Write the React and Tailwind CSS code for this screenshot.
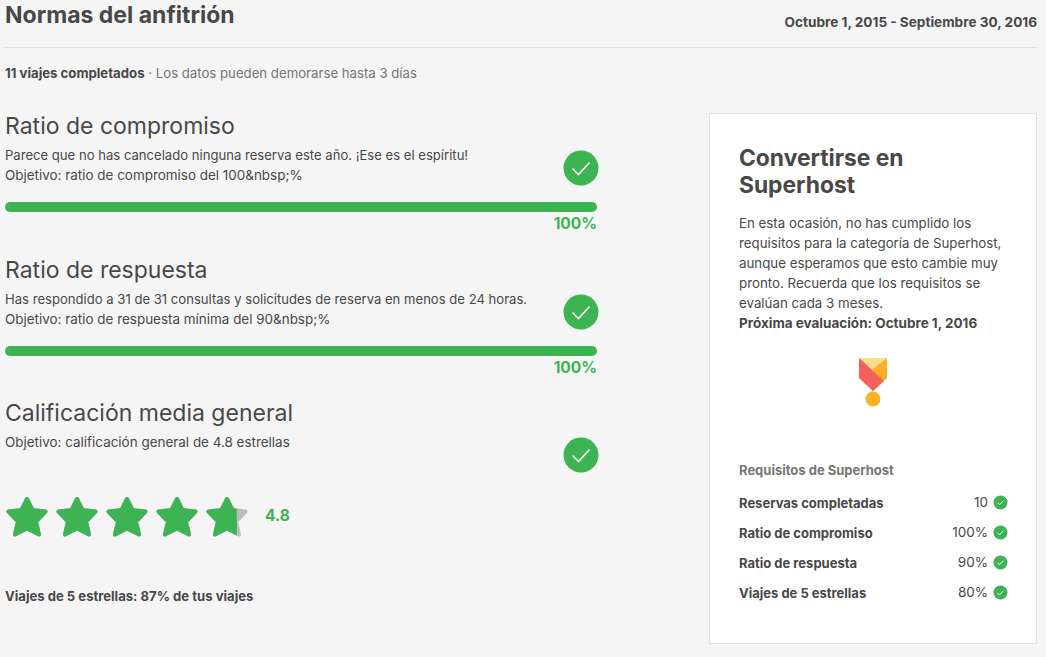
const font = { fontFamily: '"Inter", "Liberation Sans", sans-serif' };

function CheckCircle() {
  return (
    <svg width="36" height="36" viewBox="0 0 36 36" className="shrink-0">
      <circle cx="18" cy="18" r="17.5" fill="#3eb353" />
      <path d="M9.5 18.5l6 6 11-12" fill="none" stroke="#fff" strokeWidth="1.6" />
    </svg>
  );
}

function SmallCheck() {
  return (
    <svg width="15" height="15" viewBox="0 0 15 15" className="shrink-0">
      <circle cx="7.5" cy="7.5" r="7" fill="#3eb353" />
      <path d="M4.5 7.8l2 2 4-4.2" fill="none" stroke="#fff" strokeWidth="1" />
    </svg>
  );
}

function Star({ id, fill = 1 }) {
  const d = "M22 4L27.5 15L40.5 16.5L31 26.5L34 39.5L22 33.5L10 39.5L13 26.5L3.5 16.5L16.5 15Z";
  return (
    <svg width="44" height="44" viewBox="0 0 44 44" className="shrink-0 mr-1.5">
      <defs>
        <clipPath id={id}>
          <rect x="0" y="0" width={44 * fill} height="44" />
        </clipPath>
      </defs>
      <path d={d} fill="#bdbdbd" stroke="#bdbdbd" strokeWidth="4" strokeLinejoin="round" />
      <path d={d} fill="#3eb353" stroke="#3eb353" strokeWidth="4" strokeLinejoin="round" clipPath={`url(#${id})`} />
    </svg>
  );
}

function Metric({ title, text, goal, showBar = true }) {
  return (
    <section className="w-[592px]">
      <h2 className="text-[23px] leading-[30px] text-[#484848]">{title}</h2>
      <div className="flex justify-between items-start mt-[4px]">
        <div className="leading-[20px] text-[#484848]">
          {text && <p className="text-[13.1px]">{text}</p>}
          <p className="text-[13.45px]">{goal}</p>
        </div>
        <div className="mt-[5px] mr-[-2px]">
          <CheckCircle />
        </div>
      </div>
      {showBar && (
        <>
          <div className="h-[10px] rounded-full bg-[#3eb353] mt-[16px]" />
          <p className="text-right font-bold text-[15.5px] leading-[20px] text-[#3eb353] mt-[2px]">100%</p>
        </>
      )}
    </section>
  );
}

const reqs = [
  ["Reservas completadas", "10"],
  ["Ratio de compromiso", "100%"],
  ["Ratio de respuesta", "90%"],
  ["Viajes de 5 estrellas", "80%"],
];

export default function App() {
  return (
    <div style={font} className="w-[1046px] h-[657px] overflow-hidden bg-[#f5f5f5] text-[#484848] pl-[5px] pr-[9px]">
      <header className="flex justify-between h-[48px] border-b border-[#e0e0e0]">
        <h1 className="text-[23px] leading-[30px] font-bold">Normas del anfitrión</h1>
        <p className="text-[13.6px] font-bold leading-[20px] mt-[12px]">Octubre 1, 2015 - Septiembre 30, 2016</p>
      </header>
      <p className="text-[13.2px] leading-[20px] mt-[15px] text-[#767676]">
        <span className="font-bold text-[#484848]">11 viajes completados</span> · Los datos pueden demorarse hasta 3 días
      </p>

      <div className="flex justify-between items-start mt-[28px]">
        <div className="flex flex-col gap-[20.5px]">
          <Metric
            title="Ratio de compromiso"
            text="Parece que no has cancelado ninguna reserva este año. ¡Ese es el espíritu!"
            goal="Objetivo: ratio de compromiso del 100&amp;nbsp;%"
          />
          <Metric
            title="Ratio de respuesta"
            text="Has respondido a 31 de 31 consultas y solicitudes de reserva en menos de 24 horas."
            goal="Objetivo: ratio de respuesta mínima del 90&amp;nbsp;%"
          />
          <div>
            <Metric title="Calificación media general" goal="Objetivo: calificación general de 4.8 estrellas" showBar={false} />
            <div className="flex items-center mt-[22px]">
              <Star id="s1" />
              <Star id="s2" />
              <Star id="s3" />
              <Star id="s4" />
              <Star id="s5" fill={0.72} />
              <span className="ml-[10px] mb-[2px] font-bold text-[15.5px] text-[#3eb353]">4.8</span>
            </div>
            <p className="font-bold text-[13.1px] leading-[20px] mt-[47px]">Viajes de 5 estrellas: 87% de tus viajes</p>
          </div>
        </div>

        <aside className="w-[328px] h-[531px] bg-white border border-[#e0e0e0] pl-[29px] pr-[28px] pt-[30px] mt-[2px]">
          <h2 className="text-[22.8px] leading-[27px] font-bold">Convertirse en Superhost</h2>
          <p className="text-[13.3px] leading-[20px] mt-[15px]">
            En esta ocasión, no has cumplido los requisitos para la categoría de Superhost, aunque esperamos que esto cambie muy pronto. Recuerda que los requisitos se evalúan cada 3 meses.
          </p>
          <p className="text-[13.5px] leading-[20px] font-bold">Próxima evaluación: Octubre 1, 2016</p>
          <div className="flex justify-center mt-[24px] pr-px">
            <svg width="30" height="50" viewBox="0 0 30 50">
              <polygon points="1,1 29,1 29,21 15,34 1,21" fill="#f9dc8c" />
              <polygon points="29,1 29,21 15,34 15,12" fill="#fdb022" />
              <polygon points="1,1 26,24 15,34 1,21" fill="#f5605f" />
              <circle cx="15" cy="42" r="7.5" fill="#fdb022" />
            </svg>
          </div>
          <h3 className="text-[13px] leading-[18px] font-bold text-[#767676] mt-[54px]">Requisitos de Superhost</h3>
          <ul className="mt-[15px] flex flex-col gap-[10px]">
            {reqs.map(([label, value]) => (
              <li key={label} className="flex justify-between items-center h-[20px]">
                <span className="font-bold text-[13px]">{label}</span>
                <span className="flex items-center gap-[5px] text-[13.5px] mb-[4px]">
                  {value}
                  <SmallCheck />
                </span>
              </li>
            ))}
          </ul>
        </aside>
      </div>
    </div>
  );
}
